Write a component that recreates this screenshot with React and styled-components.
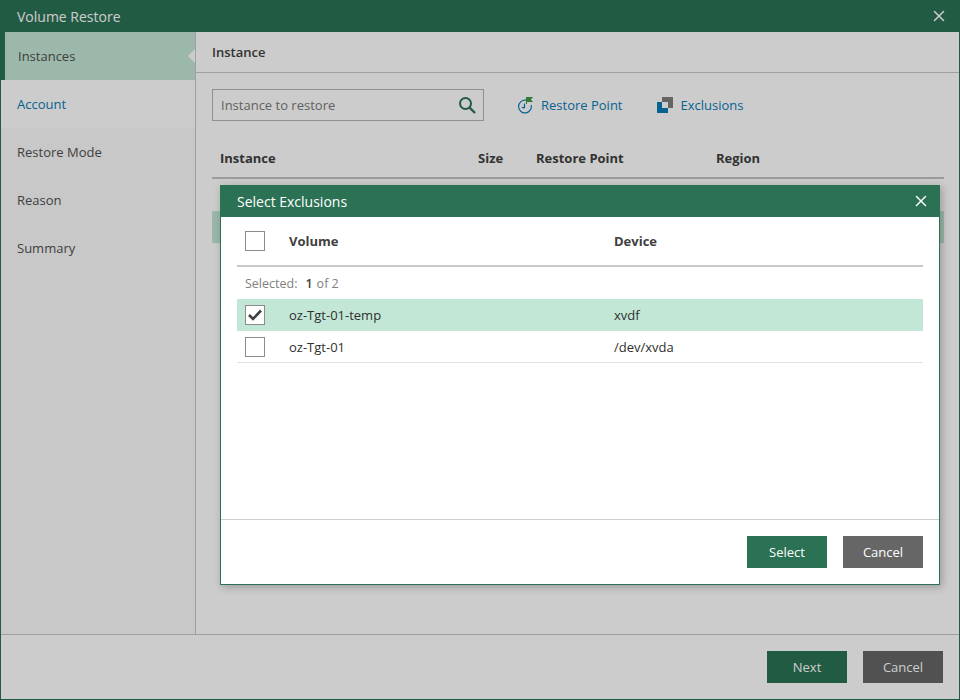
import styled, { createGlobalStyle } from "styled-components";
import { X } from "lucide-react";

const Global = createGlobalStyle`
	html, body { margin: 0; padding: 0; }
	body { font-family: "Open Sans", "Liberation Sans", sans-serif; font-size: 13px; color: #404040; }
	* { box-sizing: border-box; }
`;

const Window = styled.div`
	position: relative;
	width: 960px;
	height: 700px;
	display: flex;
	flex-direction: column;
	background: #fff;
	border: 1px solid #2b7255;
	border-top: 0;
`;

const TitleBar = styled.div`
	height: 32px;
	flex-shrink: 0;
	margin: 0 -1px;
	padding: 0 12px 0 17px;
	display: flex;
	align-items: center;
	justify-content: space-between;
	background: #2b7255;
	color: #fff;
	font-size: 14px;
`;

const CloseButton = styled.button`
	padding: 0;
	border: 0;
	background: none;
	color: #fff;
	display: flex;
`;

const Middle = styled.div`
	flex: 1;
	display: flex;
	min-height: 0;
`;

const Sidebar = styled.nav`
	width: 195px;
	flex-shrink: 0;
	background: #fafafa;
	border-right: 1px solid #c8c8c8;
`;

const NavItem = styled.div`
	position: relative;
	height: 48px;
	padding-left: 16px;
	display: flex;
	align-items: center;
	background: ${(p) => (p.$active ? "#c3e7d6" : p.$link ? "#ffffff" : "transparent")};
	color: ${(p) => (p.$link ? "#0a7bb5" : "#505050")};
	${(p) => p.$active && "margin-left: -1px; padding-left: 13px; border-left: 5px solid #2b7255;"}
	${(p) =>
		p.$active &&
		`&::after {
			content: "";
			position: absolute;
			right: 0;
			top: 17px;
			border: 7px solid transparent;
			border-right-color: #fff;
		}`}
`;

const Main = styled.main`
	flex: 1;
	min-width: 0;
	display: flex;
	flex-direction: column;
`;

const SectionHeader = styled.div`
	height: 41px;
	padding-left: 16px;
	display: flex;
	align-items: center;
	border-bottom: 1px solid #c8c8c8;
	font-weight: 600;
	padding-bottom: 1px;
`;

const Toolbar = styled.div`
	margin-top: 16px;
	padding-left: 16px;
	display: flex;
	align-items: center;
`;

const SearchBox = styled.div`
	width: 272px;
	height: 32px;
	padding: 0 7px 0 8px;
	display: flex;
	align-items: center;
	justify-content: space-between;
	border: 1px solid #b4b4b4;
	color: #7a7a7a;
`;

const ToolLink = styled.a`
	display: flex;
	align-items: center;
	gap: 8px;
	margin-left: ${(p) => p.$gap}px;
	color: #0a7bb5;
`;

const Table = styled.div`
	margin: 17px 15px 0 16px;
`;

const TableHead = styled.div`
	height: 41px;
	display: grid;
	grid-template-columns: 258px 58px 180px 1fr;
	align-items: center;
	padding-left: 8px;
	border-bottom: 2px solid #c4c4c4;
	font-weight: 700;
`;

const HiddenRow = styled.div`
	height: 32px;
	margin-top: 32px;
	background: #c3e7d6;
`;

const Footer = styled.footer`
	height: 65px;
	flex-shrink: 0;
	padding: 16px 16px 0 0;
	display: flex;
	justify-content: flex-end;
	gap: 16px;
	background: #fff;
	border-top: 1px solid #c8c8c8;
`;

const Button = styled.button`
	width: 80px;
	height: 32px;
	border: 0;
	padding: 0;
	font: inherit;
	color: #fff;
	background: ${(p) => (p.$primary ? "#2b7255" : "#666666")};
`;

const Scrim = styled.div`
	position: absolute;
	inset: 0 -1px -1px;
	background: rgba(0, 0, 0, 0.2);
`;

const Modal = styled.section`
	position: absolute;
	left: 219px;
	top: 185px;
	width: 720px;
	height: 400px;
	display: flex;
	flex-direction: column;
	background: #fff;
	border: 1px solid #2b7255;
	border-top: 0;
	box-shadow: 2px 2px 8px rgba(0, 0, 0, 0.25);
`;

const ModalTitle = styled.div`
	height: 32px;
	flex-shrink: 0;
	margin: 0 -1px;
	padding: 0 10px 0 17px;
	display: flex;
	align-items: center;
	justify-content: space-between;
	background: #2b7255;
	color: #fff;
	font-size: 14px;
`;

const ModalBody = styled.div`
	flex: 1;
	padding: 0 16px;
`;

const VolumeHead = styled.div`
	height: 50px;
	display: grid;
	grid-template-columns: 44px 325px 1fr;
	align-items: center;
	padding-left: 8px;
	border-bottom: 2px solid #c8c8c8;
	font-weight: 700;
`;

const SelectedLine = styled.div`
	height: 32px;
	display: flex;
	align-items: center;
	padding-left: 8px;
	color: #808080;
	font-size: 12.5px;
`;

const Count = styled.b`
	margin-left: 8px;
	margin-right: 4px;
	font-weight: 600;
	color: #404040;
`;

const VolumeRow = styled.div`
	height: 32px;
	display: grid;
	grid-template-columns: 44px 325px 1fr;
	align-items: center;
	padding-left: 8px;
	color: #303030;
	background: ${(p) => (p.$selected ? "#c2e7d6" : "#fff")};
	border-bottom: 1px solid ${(p) => (p.$selected ? "#c2e7d6" : "#e0e0e0")};
`;

const CheckBox = styled.span`
	width: 20px;
	height: 20px;
	display: flex;
	align-items: center;
	justify-content: center;
	background: #fff;
	border: 1px solid #8c8c8c;
`;

const ModalFooter = styled.div`
	height: 65px;
	flex-shrink: 0;
	padding: 16px 16px 0 0;
	display: flex;
	justify-content: flex-end;
	gap: 16px;
	border-top: 1px solid #cfcfcf;
`;

const SearchIcon = () => (
	<svg width="18" height="18" viewBox="0 0 18 18" fill="none" stroke="#2b7255" strokeWidth="2">
		<circle cx="7.5" cy="7.5" r="5.5" />
		<path d="M11.5 11.5 L17 17" strokeWidth="2.4" />
	</svg>
);

const RestorePointIcon = () => (
	<svg width="16" height="17" viewBox="0 0 16 17" fill="none">
		<path d="M9 3.2 A6.4 6.4 0 1 0 14.2 8" stroke="#0a7bb5" strokeWidth="1.2" />
		<path d="M7.5 6.5 V10.6 H4.8" stroke="#0a7bb5" strokeWidth="1.2" />
		<path d="M9 0 H16 L14 2.5 L16 5 H10 V7 H9 Z" fill="#3f9a3f" />
	</svg>
);

const ExclusionsIcon = () => (
	<svg width="16" height="16" viewBox="0 0 16 16">
		<rect x="5" y="0" width="11" height="11" fill="#7f7f7f" />
		<rect x="0" y="5" width="11" height="11" fill="#0a7bb5" />
		<rect x="5" y="5" width="6" height="6" fill="#fff" />
	</svg>
);

const CheckMark = () => (
	<svg width="14" height="12" viewBox="0 0 14 12" fill="none" stroke="#404040" strokeWidth="2.6">
		<path d="M1 6 L5 10 L13 1.5" />
	</svg>
);

const steps = ["Instances", "Account", "Restore Mode", "Reason", "Summary"];

export default function App() {
	return (
		<Window>
			<Global />
			<TitleBar>
				Volume Restore
				<CloseButton>
					<X size={18} strokeWidth={2} />
				</CloseButton>
			</TitleBar>
			<Middle>
				<Sidebar>
					{steps.map((step, i) => (
						<NavItem key={step} $active={i === 0} $link={i === 1}>
							{step}
						</NavItem>
					))}
				</Sidebar>
				<Main>
					<SectionHeader>Instance</SectionHeader>
					<Toolbar>
						<SearchBox>
							Instance to restore
							<SearchIcon />
						</SearchBox>
						<ToolLink $gap={33}>
							<RestorePointIcon />
							Restore Point
						</ToolLink>
						<ToolLink $gap={34}>
							<ExclusionsIcon />
							Exclusions
						</ToolLink>
					</Toolbar>
					<Table>
						<TableHead>
							<span>Instance</span>
							<span>Size</span>
							<span>Restore Point</span>
							<span>Region</span>
						</TableHead>
						<HiddenRow />
					</Table>
				</Main>
			</Middle>
			<Footer>
				<Button $primary>Next</Button>
				<Button>Cancel</Button>
			</Footer>
			<Scrim />
			<Modal>
				<ModalTitle>
					Select Exclusions
					<CloseButton>
						<X size={18} strokeWidth={2} />
					</CloseButton>
				</ModalTitle>
				<ModalBody>
					<VolumeHead>
						<CheckBox />
						<span>Volume</span>
						<span>Device</span>
					</VolumeHead>
					<SelectedLine>
						Selected: <Count>1</Count> of 2
					</SelectedLine>
					<VolumeRow $selected>
						<CheckBox>
							<CheckMark />
						</CheckBox>
						<span>oz-Tgt-01-temp</span>
						<span>xvdf</span>
					</VolumeRow>
					<VolumeRow>
						<CheckBox />
						<span>oz-Tgt-01</span>
						<span>/dev/xvda</span>
					</VolumeRow>
				</ModalBody>
				<ModalFooter>
					<Button $primary>Select</Button>
					<Button>Cancel</Button>
				</ModalFooter>
			</Modal>
		</Window>
	);
}
